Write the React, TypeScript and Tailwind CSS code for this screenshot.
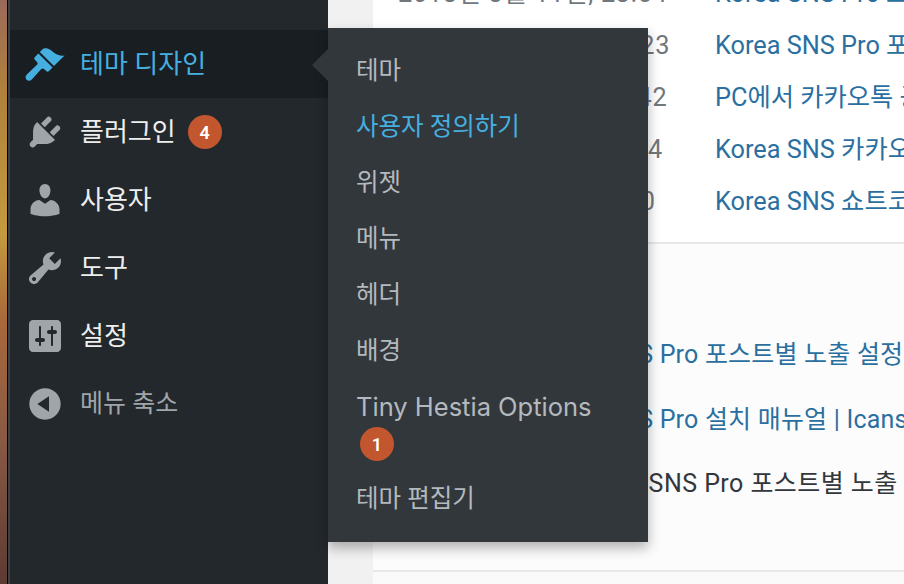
const sans = "font-['Roboto','Noto_Sans_CJK_KR',sans-serif]";

function Dash({ d, className }: { d: string; className: string }) {
  return (
    <svg viewBox="0 0 20 20" fill="currentColor" className={className}>
      <path d={d} />
    </svg>
  );
}

const icons = {
  appearance:
    "M14.48 11.06L7.41 3.99l1.5-1.5c.5-.56 2.3-.47 3.51.32 1.21.8 1.43 1.28 2.91 2.1 1.18.64 2.45 1.26 4.45.85zm-.71.71L6.7 4.7 4.93 6.47c-.39.39-.39 1.02 0 1.41l1.06 1.06c.39.39.39 1.03 0 1.42L.9 15.3c-.8.8-.8 1.9-.1 2.6s1.8.7 2.6-.1l4.71-5.32c.39-.39 1.03-.39 1.42 0l1.06 1.06c.39.39 1.02.39 1.41 0z",
  plugins:
    "M13.11 4.36L9.87 7.6 8 5.73l3.24-3.24c.35-.34 1.05-.2 1.56.32.52.51.66 1.21.31 1.55zm-8 1.77l.91-1.12 9.01 9.01-1.19.84c-.71.71-2.63 1.16-3.82 1.16H6.14L4.9 17.26c-.59.59-1.54.59-2.12 0-.59-.58-.59-1.53 0-2.12l1.24-1.24v-3.88c0-1.13.4-3.19 1.09-3.89zm7.26 3.97l3.24-3.24c.34-.35 1.04-.21 1.55.31.52.51.66 1.21.31 1.55l-3.24 3.25z",
  users:
    "M10 9.25c-2.27 0-2.73-3.44-2.73-3.44C7 4.02 7.82 2 9.97 2c2.16 0 2.98 2.02 2.71 3.81 0 0-.41 3.44-2.68 3.44zm0 2.57L12.72 10c2.39 0 4.52 2.33 4.52 4.53v2.49s-3.65 1.13-7.24 1.13c-3.65 0-7.24-1.13-7.24-1.13v-2.49c0-2.25 1.94-4.48 4.47-4.48z",
  tools:
    "M16.68 9.77c-1.34 1.34-3.3 1.67-4.95.99l-5.41 6.52c-.99.99-2.59.99-3.58 0s-.99-2.59 0-3.57l6.52-5.42c-.68-1.65-.35-3.61.99-4.95 1.28-1.28 3.12-1.62 4.72-1.06l-2.89 2.89 2.82 2.82 2.86-2.87c.53 1.58.18 3.39-1.08 4.65zM3.81 16.21c.4.39 1.04.39 1.43 0 .4-.4.4-1.04 0-1.43-.39-.4-1.03-.4-1.43 0-.39.39-.39 1.03 0 1.43z",
  settings:
    "M18 16V4c0-1.1-.9-2-2-2H4c-1.1 0-2 .9-2 2v12c0 1.1.9 2 2 2h12c1.1 0 2-.9 2-2zM8 11h1c.55 0 1 .45 1 1s-.45 1-1 1H8v1.5c0 .28-.22.5-.5.5s-.5-.22-.5-.5V13H6c-.55 0-1-.45-1-1s.45-1 1-1h1V5.5c0-.28.22-.5.5-.5s.5.22.5.5V11zm5-2h-1c-.55 0-1-.45-1-1s.45-1 1-1h1V5.5c0-.28.22-.5.5-.5s.5.22.5.5V7h1c.55 0 1 .45 1 1s-.45 1-1 1h-1v5.5c0 .28-.22.5-.5.5s-.5-.22-.5-.5V9z",
  collapse:
    "M10 2.16c4.33 0 7.84 3.51 7.84 7.84s-3.51 7.84-7.84 7.84S2.16 14.33 2.16 10 5.71 2.16 10 2.16zm2 11.72V6.12L6.18 9.97z",
};

function Badge({ n }: { n: number }) {
  return (
    <span className="flex h-[34px] w-[34px] items-center justify-center rounded-full bg-[#c2562e] text-[18px] font-semibold text-white">
      {n}
    </span>
  );
}

const menu = [
  { label: "플러그인", icon: icons.plugins, badge: 4 },
  { label: "사용자", icon: icons.users },
  { label: "도구", icon: icons.tools },
  { label: "설정", icon: icons.settings },
];

const submenu = ["위젯", "메뉴", "헤더", "배경"];

const recent = [
  { date: "2018년 3월 11일, 23:54", title: "Korea SNS Pro 포스트별 노출", rowCls: "-mt-[32px]", cls: "tracking-[0.7px]" },
  { date: "2018년 3월 11일, 22:23", title: "Korea SNS Pro 포스트별", rowCls: "", cls: "tracking-[0.85px]" },
  { date: "2018년 3월 11일, 21:42", title: "PC에서 카카오톡 공유하기", rowCls: "", cls: "tracking-[0.7px]" },
  { date: "2018년 3월 11일, 21:14", title: "Korea SNS 카카오톡 공유", rowCls: "", cls: "tracking-[0.45px]" },
  { date: "2018년 3월 11일, 20:50", title: "Korea SNS 쇼트코드 사용", rowCls: "", cls: "tracking-[0.05px]" },
];

export default function App() {
  return (
    <div className={`${sans} relative flex h-[584px] w-[904px] overflow-hidden bg-[#f1f1f1]`}>
      {/* wallpaper sliver at the screen edge */}
      <div className="w-[7px] shrink-0 bg-[linear-gradient(180deg,#9a6a5a_0%,#b0803c_15%,#c49a3e_40%,#a8683a_55%,#8a5a44_75%,#5c3a32_100%)]" />
      <div className="w-px shrink-0 bg-black" />
      <div className="w-[2px] shrink-0 bg-[#3d4146]" />

      <aside className="w-[318px] shrink-0 bg-[#23282d] pt-[30px]">
        <div className="flex h-[68px] items-center bg-[#191e23] text-[#45b0e0]">
          <Dash d={icons.appearance} className="ml-[15px] h-[40px] w-[40px]" />
          <span className="ml-[15px] text-[26px]">테마 디자인</span>
        </div>
        {menu.map((item) => (
          <div key={item.label} className="flex h-[68px] items-center text-[#eeeeee]">
            <Dash d={item.icon} className="ml-[15px] h-[40px] w-[40px] text-[#a0a5aa]" />
            <span className="ml-[15px] text-[26px]">{item.label}</span>
            {item.badge && (
              <span className="ml-[12px]">
                <Badge n={item.badge} />
              </span>
            )}
          </div>
        ))}
        <div className="flex h-[68px] items-center text-[#a0a5aa]">
          <Dash d={icons.collapse} className="ml-[15px] h-[40px] w-[40px]" />
          <span className="ml-[15px] text-[25px]">메뉴 축소</span>
        </div>
      </aside>

      <main className="flex-1 pl-[45px]">
        <div className="h-[244px] overflow-hidden border-b-2 border-[#e8e8e8] bg-white">
          <div className="flex flex-col pl-[25px]">
            {recent.map((row) => (
              <div key={row.date} className={`flex h-[52px] shrink-0 items-center text-[25.3px] ${row.rowCls}`}>
                <span className={`w-[317px] shrink-0 whitespace-nowrap text-[#72777c] ${row.cls}`}>{row.date}</span>
                <span className="whitespace-nowrap text-[#2a6f9f]">{row.title}</span>
              </div>
            ))}
          </div>
        </div>
        <div className="h-[328px] border-b-2 border-[#e8e8e8] bg-[#fcfcfc] pt-[78px] text-[25px]">
          <div className="flex h-[65px] items-center whitespace-nowrap pl-[160px] tracking-[0.2px] text-[#2a6f9f]">Korea SNS Pro 포스트별 노출 설정</div>
          <div className="flex h-[65px] items-center whitespace-nowrap pl-[160px] tracking-[0.2px] text-[#2a6f9f]">Korea SNS Pro 설치 매뉴얼 | Icansoft</div>
          <div className="flex h-[64px] items-center whitespace-nowrap pl-[202px] tracking-[0.45px] text-[#32373c]">Korea SNS Pro 포스트별 노출 설정</div>
        </div>
        <div className="h-[12px] bg-[#fafafa]" />
      </main>

      {/* flyout submenu */}
      <div className="absolute left-[328px] top-[28px] h-[514px] w-[320px] bg-[#32373c] pt-[15px] text-[24.5px] text-[#b4b9be] shadow-[0_6px_12px_rgba(0,0,0,0.3)]">
        <div className="absolute -left-[16px] top-[21px] h-0 w-0 border-y-[16px] border-r-[16px] border-y-transparent border-r-[#32373c]" />
        <div className="flex h-[56px] items-center pl-[28px]">테마</div>
        <div className="flex h-[56px] items-center pl-[28px] text-[#45b0e0]">사용자 정의하기</div>
        {submenu.map((label) => (
          <div key={label} className="flex h-[56px] items-center pl-[28px]">
            {label}
          </div>
        ))}
        <div className="flex h-[92px] flex-col pl-[28px] pt-[10px]">
          <span className="font-['Inter','Noto_Sans_CJK_KR',sans-serif] text-[25.5px] leading-[36px]">Tiny Hestia Options</span>
          <span className="ml-[4px] mt-[2px]">
            <Badge n={1} />
          </span>
        </div>
        <div className="flex h-[56px] items-center pl-[28px]">테마 편집기</div>
      </div>
    </div>
  );
}
